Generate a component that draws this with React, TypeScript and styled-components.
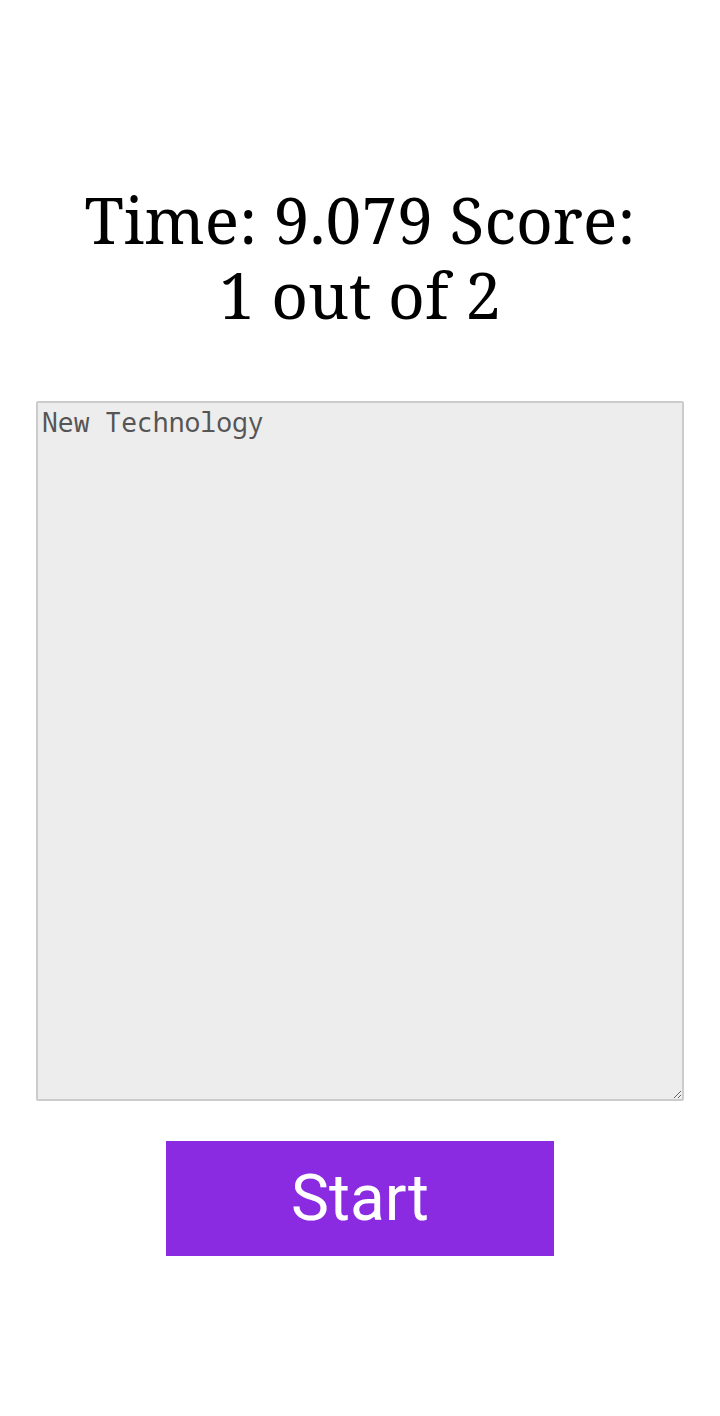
import React from "react";
import styled, { createGlobalStyle } from "styled-components";

const Global = createGlobalStyle`
  html, body { margin: 0; padding: 0; background: #ffffff; }
  body { font-family: "Noto Serif", "DejaVu Serif", serif; }
`;

const Page = styled.main`
  display: flex;
  flex-direction: column;
  align-items: center;
  padding-top: 182px;
`;

const Status = styled.h1`
  margin: 0;
  width: 600px;
  text-align: center;
  font-family: "Noto Serif", "DejaVu Serif", serif;
  font-weight: 400;
  font-size: 64px;
  line-height: 75px;
  color: #000;
`;

const Typing = styled.textarea`
  box-sizing: border-box;
  margin-top: 69px;
  width: 90%;
  height: 700px;
  padding: 4px 4px;
  background: #ededed;
  border: 2px solid #cccccc;
  border-radius: 2px;
  font-family: "Noto Sans Mono", "Droid Sans Mono", "DejaVu Sans Mono", monospace;
  font-size: 26.4px;
  line-height: 1.2;
  color: #555555;
  resize: both;
  outline: none;
`;

const StartButton = styled.button`
  margin-top: 40px;
  width: 388px;
  height: 115px;
  border: none;
  background: #8a2be2;
  color: #ffffff;
  font-family: Roboto, "Liberation Sans", sans-serif;
  font-size: 64px;
  cursor: pointer;
`;

export default function App() {
  return (
    <>
      <Global />
      <Page>
        <Status>Time: 9.079 Score: 1 out of 2</Status>
        <Typing defaultValue="New Technology" />
        <StartButton>Start</StartButton>
      </Page>
    </>
  );
}
